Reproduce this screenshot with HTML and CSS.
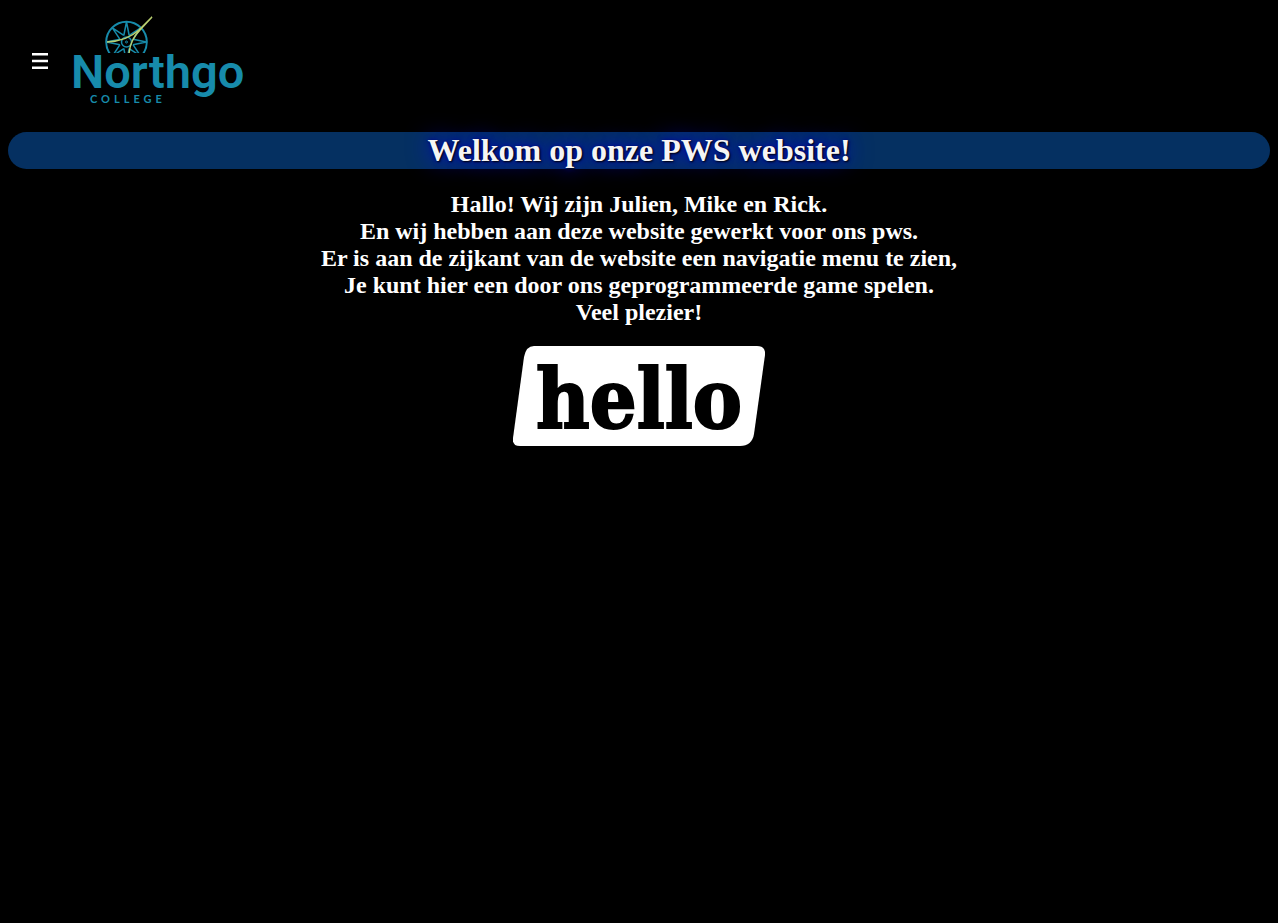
FILE: index.html
```html
<!DOCTYPE html>
<html lang="nl">
<head>
  <meta charset="utf-8">
  <meta name="viewport" content="width=device-width, initial-scale=1">
  <title>PWS website</title>
  <link rel="stylesheet" href="styles.css">
</head>
<body class="page">
  <header class="topbar">
    <button class="menu-button" type="button" aria-label="Menu">
      <svg class="menu-icon" viewBox="0 0 16 16" aria-hidden="true">
        <path d="M0 1.3H16M0 8H16M0 14.7H16" stroke="#fff" stroke-width="2.5"/>
      </svg>
    </button>
    <a class="logo" href="#" aria-label="Northgo College">
      <svg class="logo-art" viewBox="0 0 180 100">
        <defs>
          <clipPath id="horizon"><rect x="20" y="0" width="80" height="42"/></clipPath>
        </defs>
        <g clip-path="url(#horizon)" fill="none" stroke="#178bab">
          <circle cx="54.5" cy="31" r="20.3" stroke-width="2"/>
          <circle cx="54.5" cy="31" r="5" stroke-width="1.5"/>
          <circle cx="54.5" cy="31" r="1" stroke-width="1"/>
          <g stroke-width="1.5">
            <path d="M51.8 24.5 54.5 11 57.2 24.5"/>
            <path d="M51.8 24.5 54.5 11 57.2 24.5" transform="rotate(45 54.5 31)"/>
            <path d="M51.8 24.5 54.5 11 57.2 24.5" transform="rotate(90 54.5 31)"/>
            <path d="M51.8 24.5 54.5 11 57.2 24.5" transform="rotate(135 54.5 31)"/>
            <path d="M51.8 24.5 54.5 11 57.2 24.5" transform="rotate(180 54.5 31)"/>
            <path d="M51.8 24.5 54.5 11 57.2 24.5" transform="rotate(225 54.5 31)"/>
            <path d="M51.8 24.5 54.5 11 57.2 24.5" transform="rotate(270 54.5 31)"/>
            <path d="M51.8 24.5 54.5 11 57.2 24.5" transform="rotate(315 54.5 31)"/>
          </g>
          <path d="M35 31Q55 30 67 19L80 6 68 19Q58 29 57 43" stroke="#b9cf70" stroke-width="1.5"/>
        </g>
        <text class="logo-name" x="-1" y="77">Northgo</text>
        <text class="logo-sub" x="18" y="92">COLLEGE</text>
      </svg>
    </a>
  </header>
  <main class="content">
    <h1 class="banner">Welkom op onze PWS website!</h1>
    <h2 class="intro">Hallo! Wij zijn Julien, Mike en Rick.<br>
      En wij hebben aan deze website gewerkt voor ons pws.<br>
      Er is aan de zijkant van de website een navigatie menu te zien,<br>
      Je kunt hier een door ons geprogrammeerde game spelen.<br>
      Veel plezier!</h2>
    <svg class="hello" viewBox="0 0 252 100" role="img" aria-label="hello">
      <path d="M21 0H244Q253 0 252 9L241 88Q239 100 227 100H7Q-1 100 0 92L11 11Q13 0 21 0Z" fill="#fff"/>
      <text class="hello-text" x="126" y="82" text-anchor="middle">hello</text>
    </svg>
  </main>
</body>
</html>
```
FILE: styles.css
```css
.page {
  margin: 8px;
  background: #000;
  color: #fff;
  font-family: "Liberation Serif", "Times New Roman", serif;
}

.topbar {
  display: flex;
  align-items: center;
  gap: 24px;
  padding: 3px 24px 21px;
}

.menu-button {
  display: flex;
  padding: 0;
  border: 0;
  background: transparent;
  cursor: pointer;
}

.menu-icon {
  width: 16px;
  height: 16px;
}

.logo {
  display: flex;
}

.logo-art {
  width: 180px;
  height: 100px;
}

.logo-name {
  fill: #178bab;
  font: 600 47px Roboto, sans-serif;
}

.logo-sub {
  fill: #178bab;
  font: 700 11px Lato, sans-serif;
  letter-spacing: 4px;
}

.content {
  text-align: center;
}

.banner {
  margin: 0 0 22px;
  border-radius: 20px;
  background: #053061;
  color: #f5f5f5;
  font-size: 32px;
  line-height: 37px;
  text-shadow: 1px 1px 2px #000, 0 0 25px #00f, 0 0 5px #00008b;
}

.intro {
  margin: 0 0 20px;
  font-size: 24px;
  line-height: 27px;
}

.hello {
  display: block;
  width: 252px;
  height: 100px;
  margin: 0 auto;
}

.hello-text {
  font: 700 82px "DejaVu Serif Condensed", "DejaVu Serif", serif;
  stroke: #000;
  stroke-width: 2px;
}
```
